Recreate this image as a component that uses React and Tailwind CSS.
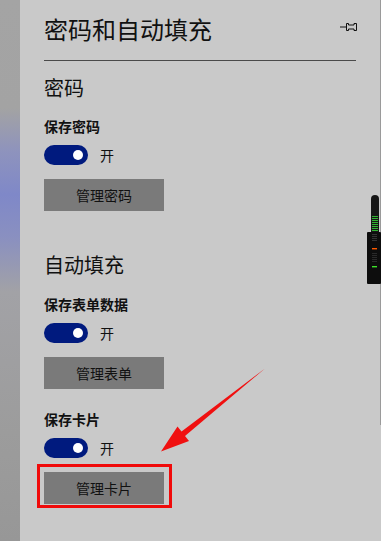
import React from 'react';

const cjk = { fontFamily: '"Noto Sans CJK SC", "Noto Sans", sans-serif' };

const Toggle = () => (
  <div className="mt-[9px] flex items-center h-[20px]">
    <div className="w-[44px] h-[20px] rounded-full bg-[#001a7e] flex items-center justify-end pr-[5px]">
      <div className="w-[10px] h-[10px] rounded-full bg-white" />
    </div>
    <span className="ml-[12px] text-[14px] leading-[20px] text-[#111]">开</span>
  </div>
);

const ManageButton = ({ label, highlight }) => (
  <div className="relative mt-[14px] w-[120px]">
    <button className="w-[120px] h-[32px] bg-[#7a7a7a] text-[14px] text-[#111] flex items-center justify-center">
      {label}
    </button>
    {highlight && (
      <div className="absolute left-[-7px] top-[-8px] right-[-8px] bottom-[-4px] border-[3px] border-[#f00a0a]" />
    )}
  </div>
);

const Section = ({ title, children, className }) => (
  <div className={className}>
    <div className="text-[20px] leading-[28px] text-[#111]">{title}</div>
    {children}
  </div>
);

const Setting = ({ label, button, highlight, className = 'mt-[14px]' }) => (
  <div className={className}>
    <div className="text-[14px] leading-[20px] font-bold text-[#111]">{label}</div>
    <Toggle />
    <ManageButton label={button} highlight={highlight} />
  </div>
);

export default function App() {
  return (
    <div className="relative w-[381px] h-[541px] flex overflow-hidden bg-[#c9c9c9]" style={cjk}>
      {/* blurred background strip */}
      <div className="w-[20px] h-full bg-[linear-gradient(to_bottom,#a4a4a4_0%,#a3a3a3_20%,#8e93bd_28%,#7f88c8_36%,#8a90c0_44%,#a2a2a6_54%,#9c9c9c_80%,#979797_100%)]" />

      <div className="flex-1 pl-[24px] pr-[25px] pt-[13px]">
        <div className="flex items-center justify-between">
          <h1 className="text-[24px] leading-[32px] text-[#111]">密码和自动填充</h1>
          <svg width="17" height="10" viewBox="0 0 17 10" className="mr-[-1px] mb-[4px]">
            <path d="M0 5H6.5" stroke="#111" strokeWidth="1" />
            <path d="M6.5 1.5H8.5V3H14V1.5H16.5V8.5H14V7H8.5V8.5H6.5Z" fill="none" stroke="#111" strokeWidth="1" />
          </svg>
        </div>
        <div className="mt-[15px] h-px bg-[#4a4a4a]" />

        <Section title="密码" className="mt-[13px]">
          <Setting label="保存密码" button="管理密码" />
        </Section>

        <Section title="自动填充" className="mt-[40px]">
          <Setting label="保存表单数据" button="管理表单" className="mt-[15px]" />
          <Setting label="保存卡片" button="管理卡片" highlight className="mt-[20px]" />
        </Section>
      </div>

      {/* right edge line */}
      <div className="absolute right-[0px] top-0 w-px h-[425px] bg-[#9a9a9a]" />

      {/* volume meter overlay */}
      <svg className="absolute left-[367px] top-[190px]" width="14" height="94" viewBox="0 0 14 94">
        <rect x="4" y="5" width="8" height="60" rx="4" fill="#161616" />
        {Array.from({ length: 12 }).map((_, i) => (
          <rect key={i} x="5" y={26 + i * 2} width="6" height="1" fill="#2fb52f" />
        ))}
        <rect x="0" y="42" width="14" height="52" rx="1" fill="#0d0d0d" />
        {Array.from({ length: 4 }).map((_, i) => (
          <rect key={'a' + i} x="5" y={44 + i * 2} width="5" height="1" fill="#333" />
        ))}
        <rect x="5" y="58" width="5" height="1.4" fill="#ff5a00" />
        {Array.from({ length: 5 }).map((_, i) => (
          <rect key={'b' + i} x="5" y={63 + i * 2} width="5" height="1" fill="#2a2a2a" />
        ))}
        <rect x="5" y="76" width="5" height="1.4" fill="#3ee02a" />
      </svg>

      {/* red annotation arrow */}
      <svg className="absolute left-0 top-0 pointer-events-none" width="381" height="541" viewBox="0 0 381 541">
        <polygon
          points="265,368.5 185,436 189,441 161,451.5 177.5,426.5 181.5,431.5"
          fill="#f01010"
        />
      </svg>
    </div>
  );
}
